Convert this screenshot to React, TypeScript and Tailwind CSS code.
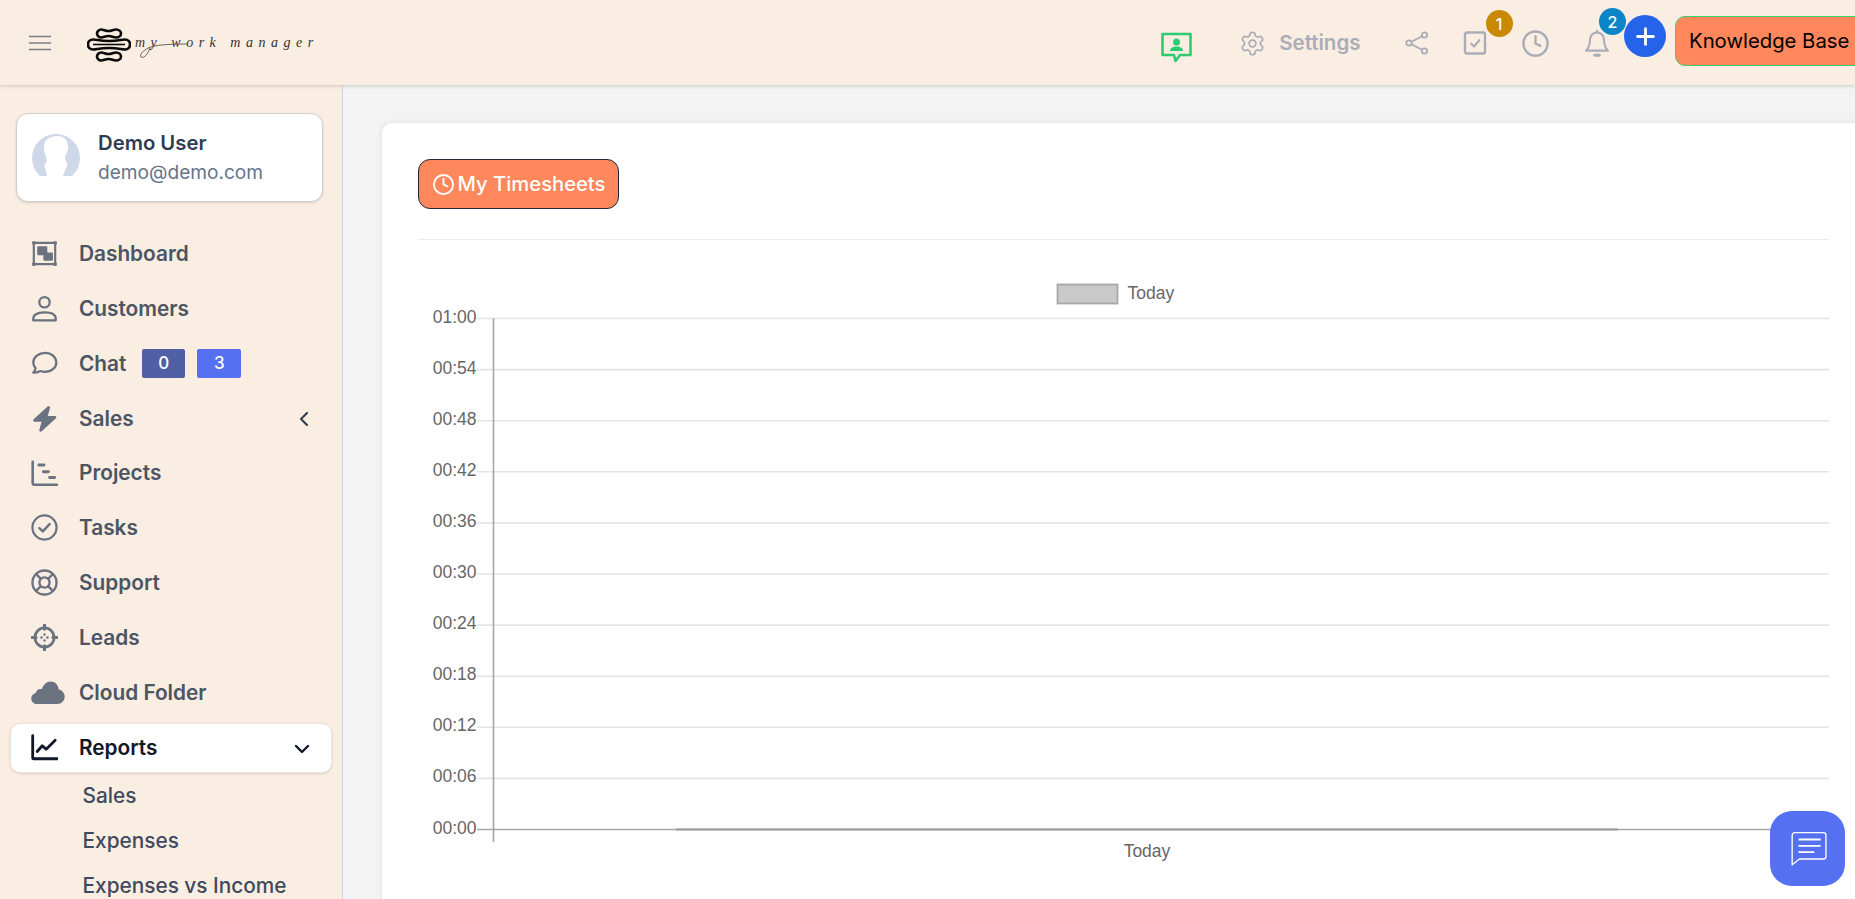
import React from "react";
import { ChevronDown, ChevronLeft, Clock, Plus, Settings } from "lucide-react";

type IconProps = { className?: string };

const Line = ({ className, children }: IconProps & { children: React.ReactNode }) => (
  <svg viewBox="0 0 24 24" fill="none" stroke="currentColor" strokeWidth={2} strokeLinecap="round" strokeLinejoin="round" className={className}>
    {children}
  </svg>
);

const DashboardIcon = (p: IconProps) => (
  <Line {...p}>
    <rect x="2.500" y="2.500" width="19" height="19" strokeWidth="1.900" />
    <rect x="1" y="1" width="3" height="3" fill="currentColor" stroke="none" rx=".7" />
    <rect x="20" y="1" width="3" height="3" fill="currentColor" stroke="none" rx=".7" />
    <rect x="1" y="20" width="3" height="3" fill="currentColor" stroke="none" rx=".7" />
    <rect x="20" y="20" width="3" height="3" fill="currentColor" stroke="none" rx=".7" />
    <rect x="5.500" y="5.500" width="9" height="8" fill="currentColor" stroke="none" rx="1" />
    <rect x="11" y="11" width="8.500" height="7.500" fill="currentColor" stroke="none" rx="1" />
  </Line>
);
const UserIcon = (p: IconProps) => (
  <Line {...p}>
    <circle cx="12" cy="6.500" r="4.600" />
    <path d="M2 22.500v-1.200c0-3.400 3-5.800 10-5.800s10 2.400 10 5.800v1.200z" />
  </Line>
);
const ChatIcon = (p: IconProps) => (
  <Line {...p}>
    <path d="M12.500 2.500c5.500 0 10 3.700 10 8.500s-4.500 8.500-10 8.500c-1.500 0-3-.3-4.300-.8-1.500.9-3.500 1.500-6.200 1.500 1.100-1.200 1.800-2.600 2-4C2.900 14.600 2 12.900 2 11c0-4.800 5-8.500 10.500-8.500z" />
  </Line>
);
const BoltIcon = (p: IconProps) => (
  <svg viewBox="0 0 24 24" fill="currentColor" className={p.className}>
    <path d="M16.300 1.200c.5.300.7.800.6 1.300l-2 7.300h6.400c.5 0 .9.300 1.100.7.200.4.100.9-.2 1.300L9.500 23.300c-.4.400-1 .5-1.500.2-.5-.3-.7-.8-.6-1.300l2-7.400H3c-.5 0-.9-.3-1.100-.7-.2-.4-.1-.9.200-1.300L14.800 1.400c.4-.4 1-.5 1.500-.2z" />
  </svg>
);
const GanttIcon = (p: IconProps) => (
  <Line {...p}>
    <path d="M1.500 1.500v19c0 1 .5 1.500 1.500 1.500H23" strokeWidth="2.300" />
    <path d="M7 4.500h4.500M11 10.500h4.500M16.500 15.500h4.500" strokeWidth="2.600" />
  </Line>
);
const CheckCircleIcon = (p: IconProps) => (
  <Line {...p}>
    <circle cx="12" cy="12" r="10.700" />
    <path d="M7.500 12.500l3 3 6-6.500" strokeWidth="2.200" />
  </Line>
);
const SupportIcon = (p: IconProps) => (
  <Line {...p}>
    <circle cx="12" cy="12" r="10.700" strokeWidth="2.100" />
    <circle cx="12" cy="12" r="4.500" strokeWidth="2.100" />
    <path d="M4.600 4.600l4.200 4.200M19.400 4.600l-4.200 4.200M4.600 19.400l4.200-4.200M19.400 19.400l-4.200-4.200" strokeWidth="2.100" />
  </Line>
);
const LeadsIcon = (p: IconProps) => (
  <Line {...p}>
    <circle cx="12" cy="12" r="8.500" strokeWidth="2.400" />
    <path d="M12 1v3.500M12 19.500V23M1 12h3.500M19.500 12H23" strokeWidth="2.800" />
    <path d="M12 9.300v.1M12 14.600v.1M9.300 12h.1M14.600 12h.1" strokeWidth="2.200" />
  </Line>
);
const CloudIcon = (p: IconProps) => (
  <svg viewBox="0 0 34 24" fill="currentColor" className={p.className}>
    <path d="M6 23.500c-3.200 0-5.800-2.600-5.800-5.600 0-2.700 2-5 4.600-5.500C5.200 10 7.200 8.500 9.500 8.500c.5 0 1 .1 1.400.2C12.300 4.200 15.500 1 19.500 1c4.500 0 8 3.500 8.200 7.900 3.400.6 6 3.400 6 7.100 0 4.200-3.300 7.500-7.500 7.500z" />
  </svg>
);
const ReportsIcon = (p: IconProps) => (
  <Line {...p}>
    <path d="M1.500 1.500v19.500c0 .7.300 1 1 1h21" strokeWidth="2.500" />
    <path d="M5.500 15.500l4.500-5 3.500 3 8-8" strokeWidth="2.500" />
  </Line>
);

const NAV = [
  { label: "Dashboard", icon: DashboardIcon },
  { label: "Customers", icon: UserIcon },
  { label: "Chat", icon: ChatIcon },
  { label: "Sales", icon: BoltIcon },
  { label: "Projects", icon: GanttIcon },
  { label: "Tasks", icon: CheckCircleIcon },
  { label: "Support", icon: SupportIcon },
  { label: "Leads", icon: LeadsIcon },
  { label: "Cloud Folder", icon: CloudIcon },
];

const TICKS = ["01:00", "00:54", "00:48", "00:42", "00:36", "00:30", "00:24", "00:18", "00:12", "00:06", "00:00"];

function Logo() {
  return (
    <div className="relative flex items-center">
      <svg viewBox="0 0 44 34" className="h-[34px] w-[44px]" fill="none" stroke="#0a0a0a" strokeWidth="2.600">
        <path transform="translate(9 0.500)" d="M5 1C8 1 9 2.500 12.500 2.500S17 1 20 1C23 1 25 3 25 5S23 9 20 9C17 9 16 7.500 12.500 7.500S8 9 5 9C3 9 1 7 1 5S3 1 5 1Z" />
        <path d="M6 11.500C10 11.500 12 13 22 13S34 11.500 38 11.500C41 11.500 43 13.500 43 16.500S41 21.500 38 21.500C34 21.500 32 20 22 20S10 21.500 6 21.500C3 21.500 1 19.500 1 16.500S3 11.500 6 11.500Z" />
        <path d="M6 16.500H38" strokeWidth="1.600" />
        <path transform="translate(9 23.500)" d="M5 1C8 1 9 2.500 12.500 2.500S17 1 20 1C23 1 25 3 25 5S23 9 20 9C17 9 16 7.500 12.500 7.500S8 9 5 9C3 9 1 7 1 5S3 1 5 1Z" />
      </svg>
      <span className="-mt-[4px] ml-[4px] whitespace-nowrap font-['Liberation_Serif',serif] text-[14px] italic leading-none tracking-[5.500px] text-[#333333]">
        my work manager
      </span>
      <svg viewBox="0 0 60 20" className="absolute left-[50px] top-[12px] h-[20px] w-[60px]" fill="none" stroke="#666666" strokeWidth="1">
        <path d="M50 4C30 4 18 5 11 8C6 11 2 15 4 17C7 19 12 13 13 7" />
      </svg>
    </div>
  );
}

function TopBar() {
  return (
    <header className="relative z-10 flex h-[85px] shrink-0 items-center justify-between bg-[#faede2] shadow-[0_1px_4px_rgba(0,0,0,0.16)]">
      <div className="flex items-center">
        <svg viewBox="0 0 22 16" className="ml-[29px] h-[16px] w-[22px]" stroke="#7a7f8a" strokeWidth="1.600">
          <path d="M0 1.500h22M0 8h22M0 14.500h22" />
        </svg>
        <div className="ml-[36px] mt-[5px]">
          <Logo />
        </div>
      </div>
      <div className="flex items-center font-['Inter',sans-serif] text-[#a9adb8]">
        {/* green chat with user */}
        <svg viewBox="0 0 32 31" className="mt-[9px] h-[31px] w-[33px] text-[#2ecc71]" fill="none">
          <path d="M2 2h28v21H19.500L15 29l-1.500-6H2z" stroke="currentColor" strokeWidth="2.600" strokeLinejoin="round" />
          <circle cx="16" cy="10" r="3.500" fill="currentColor" />
          <path d="M9.500 19c0-3 2.500-4.500 6.500-4.500s6.500 1.500 6.500 4.500z" fill="currentColor" />
        </svg>
        <Settings className="ml-[46px] mt-[2px] h-[27px] w-[27px]" strokeWidth={1.500} />
        <span className="ml-[13px] mt-[2px] text-[20.500px] font-semibold leading-none">Settings</span>
        <svg viewBox="0 0 24 24" className="ml-[44px] mt-[1px] h-[24px] w-[24px]" fill="none" stroke="currentColor" strokeWidth="1.800">
          <circle cx="19.500" cy="4" r="2.700" />
          <circle cx="4" cy="12" r="2.700" />
          <circle cx="19.500" cy="20" r="2.700" />
          <path d="M6.500 10.800l10.500-5.600M6.500 13.200l10.500 5.600" />
        </svg>
        <div className="relative ml-[34px] mt-[1px] h-[24px] w-[24px]">
          <svg viewBox="0 0 24 24" className="h-[24px] w-[24px]" fill="none" stroke="currentColor">
            <rect x="2" y="1.500" width="20" height="21" rx="2" strokeWidth="2.400" />
            <path d="M7.500 12l3.500 3.500 6-7" strokeWidth="2" />
          </svg>
          <span className="absolute left-[23px] top-[-21px] flex h-[27px] w-[27px] items-center justify-center rounded-full bg-[#c98a02] text-[16px] font-medium text-white">
            1
          </span>
        </div>
        <Clock className="ml-[34.500px] mt-[1px] h-[29px] w-[29px]" strokeWidth={2} />
        <div className="relative ml-[33px] mt-[1px] h-[28px] w-[28px]">
          <svg viewBox="0 0 24 24" className="h-[28px] w-[28px]" fill="none" stroke="currentColor" strokeWidth="1.800" strokeLinecap="round" strokeLinejoin="round">
            <path d="M18 9a6 6 0 0 0-12 0c0 6-2.500 9-3.500 9.500h19C20.500 18 18 15 18 9z" />
            <path d="M10 22.500h4" strokeWidth="2.400" />
            <path d="M12 1.500v1.500" />
          </svg>
          <span className="absolute left-[16px] top-[-21px] flex h-[27px] w-[27px] items-center justify-center rounded-full bg-[#0a85c7] text-[16px] font-medium text-white">
            2
          </span>
        </div>
        <div className="-mt-[13px] ml-[13px] flex h-[42px] w-[42px] items-center justify-center rounded-full bg-[#2563eb] text-white">
          <Plus className="h-[27px] w-[27px]" strokeWidth={2.500} />
        </div>
        <button className="-mr-[12px] -mt-[3px] ml-[9px] h-[50px] w-[192px] rounded-[10px] border border-[#3ecf6e] bg-[#ff875c] pl-[13px] text-left text-[20.300px] font-normal text-black">
          Knowledge Base
        </button>
      </div>
    </header>
  );
}

function Sidebar() {
  return (
    <aside className="h-full w-[343px] shrink-0 overflow-hidden border-r border-[#c8d3e4] bg-[#faede2] font-['Inter',sans-serif]">
      <div className="ml-[16px] mt-[28px] flex h-[89px] w-[307px] items-center rounded-[12px] border border-[#cfcfcf] bg-white pl-[15px] shadow-sm">
        <svg viewBox="0 0 48 48" className="h-[48px] w-[48px]">
          <defs>
            <clipPath id="av">
              <path d="M0 0h48v42H0z" />
            </clipPath>
          </defs>
          <g clipPath="url(#av)">
            <circle cx="24" cy="24" r="24" fill="#cfd8e8" />
            <path d="M13 8c2-4 8-6 12-6 6 0 10 3 11 9 .5 4-1.500 9-3 12-.5 2 .5 4 2 6 .8 2 0 3-1 5l-3 8H15l-1-5c-1-3-2-5-1-7l2-3c-1-5-2-7-3-11 0-3 0-6 1-8z" fill="#ffffff" />
          </g>
        </svg>
        <div className="ml-[18px]">
          <div className="text-[20.300px] font-semibold leading-[24px] text-[#2f3b52]">Demo User</div>
          <div className="mt-[5px] text-[19.100px] leading-[24px] text-[#64748b]">demo@demo.com</div>
        </div>
      </div>
      <nav className="mt-[24.500px] text-[20.800px] font-semibold text-[#4b5563]">
        {NAV.map(({ label, icon: Icon }) => (
          <div key={label} className="flex h-[54.800px] items-center pl-[31px] pr-[26px]">
            <div className="flex w-[48px] shrink-0 items-center text-[#6b7280]">
              <Icon className={label === "Cloud Folder" ? "h-[25px] w-[34px] shrink-0" : "h-[27px] w-[27px]"} />
            </div>
            <span>{label}</span>
            {label === "Chat" && (
              <div className="ml-[16px] flex gap-[12px] text-[17px] font-medium text-white">
                <span className="flex h-[29px] w-[43px] items-center justify-center rounded-[2px] bg-[#5160a5]">0</span>
                <span className="flex h-[29px] w-[44px] items-center justify-center rounded-[2px] bg-[#5570f1]">3</span>
              </div>
            )}
            {label === "Sales" && <ChevronLeft className="ml-auto mt-[2px] h-[24px] w-[24px] text-[#374151]" strokeWidth={2.200} />}
          </div>
        ))}
        <div className="mx-[10px] mt-[3px] flex h-[50px] w-[322px] items-center rounded-[10px] border border-[#e5e5e5] bg-white pl-[20px] pr-[17px] text-[#111827] shadow-sm">
          <ReportsIcon className="h-[27px] w-[27px] shrink-0" />
          <span className="ml-[21px]">Reports</span>
          <ChevronDown className="ml-auto mt-[2px] h-[24px] w-[24px]" strokeWidth={2.400} />
        </div>
        <ul className="pl-[82.500px] text-[20.800px] font-medium text-[#3f4a5e]">
          <li className="flex h-[45px] items-center">Sales</li>
          <li className="flex h-[45px] items-center">Expenses</li>
          <li className="flex h-[45px] items-center whitespace-nowrap">Expenses vs Income</li>
        </ul>
      </nav>
    </aside>
  );
}

function TimesheetChart() {
  // svg origin sits at x=418, y=240 of the page
  const ox = 418;
  const oy = 240;
  const left = 477 - ox;
  const axis = 493.500 - ox;
  const right = 1829 - ox;
  const top = 318.500 - oy;
  const step = 51.100;
  return (
    <svg width="1411" height="640" className="block font-['Liberation_Sans',sans-serif]" fontSize="17.500" fill="#666666">
      <rect x={1057.500 - ox} y={284.500 - oy} width="60" height="19" fill="#c9c9c9" stroke="#a8a8a8" strokeWidth="1.800" />
      <text x={1127.500 - ox} y={299 - oy}>Today</text>
      {TICKS.map((t, i) => {
        const y = top + i * step;
        const last = i === TICKS.length - 1;
        return (
          <g key={t}>
            <line x1={left} x2={right} y1={y} y2={y} stroke={last ? "#a6a6a6" : "#e4e4e4"} strokeWidth="1.600" />
            <text x={left - 0.500} y={y + 4} textAnchor="end">{t}</text>
          </g>
        );
      })}
      <line x1={676 - ox} x2={1618 - ox} y1={top + 10 * step} y2={top + 10 * step} stroke="#999999" strokeWidth="2" />
      <line x1={axis} x2={axis} y1={top} y2={842 - oy} stroke="#a6a6a6" strokeWidth="1.600" />
      <text x={1147 - ox} y={857 - oy} textAnchor="middle">Today</text>
    </svg>
  );
}

export default function App() {
  return (
    <div className="flex h-screen flex-col overflow-hidden bg-[#f3f3f3] font-['Inter',sans-serif]">
      <TopBar />
      <div className="flex min-h-0 flex-1">
        <Sidebar />
        <main className="min-w-0 flex-1 overflow-hidden pl-[39px] pt-[38px]">
          <div className="w-[1483px] rounded-t-[10px] bg-white px-[36px] pb-[60px] pt-[36px] shadow-[0_0_6px_rgba(0,0,0,0.08)]">
            <button className="flex h-[50px] w-[201px] items-center justify-center gap-[3px] rounded-[12px] border border-[#1f2937] bg-[#ff875c] text-[20.200px] font-medium text-white">
              <Clock className="h-[23px] w-[23px]" strokeWidth={2} />
              My Timesheets
            </button>
            <div className="mt-[30px] h-px bg-[#ececec]" />
            <TimesheetChart />
          </div>
        </main>
      </div>
      <button className="fixed bottom-[13px] right-[10px] flex h-[75px] w-[75px] items-center justify-center rounded-[22px] bg-[#5570f1]">
        <svg viewBox="0 0 36 36" className="h-[38px] w-[38px]" fill="none" stroke="#ffffff" strokeWidth="1.300">
          <path d="M3 33V5c0-1.500 1-2.500 2.500-2.500h27c1.500 0 2.500 1 2.500 2.500v20c0 1.500-1 2.500-2.500 2.500H10z" strokeLinejoin="round" />
          <path d="M9 9h21M9 15h21M9 21h15" strokeWidth="1.800" />
        </svg>
      </button>
    </div>
  );
}
